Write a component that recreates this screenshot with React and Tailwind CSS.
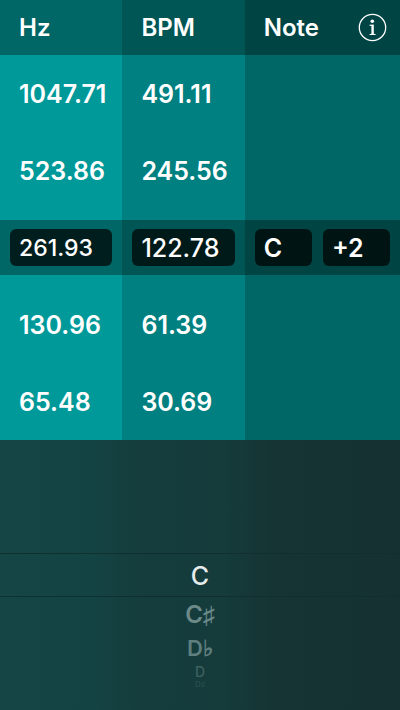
import { useState } from "react";

const upper = [
  { hz: "1047.71", bpm: "491.11", cell: "h-[78px]" },
  { hz: "523.86", bpm: "245.56", cell: "h-[87px] pb-[12px]" },
];
const lower = [
  { hz: "130.96", bpm: "61.39", cell: "h-[88px] pt-[11px]" },
  { hz: "65.48", bpm: "30.69", cell: "h-[77px]" },
];

function InfoIcon() {
  return (
    <svg viewBox="0 0 30 30" className="block size-[30px]" fill="none" aria-hidden="true">
      <circle cx="14.5" cy="14.5" r="13.2" stroke="#fff" strokeWidth="1.3" />
      <circle cx="14.3" cy="8.2" r="1.8" fill="#fff" />
      <path d="M11.5 11.8L15.8 11.4V20.8L17.7 21.2V22.1H11.5V21.2L13.4 20.8V12.9L11.5 12.7Z" fill="#fff" />
    </svg>
  );
}

function Row({ hz, bpm, cell }) {
  return (
    <tr className="text-[25px] leading-[30px]">
      <td className={`bg-[#009999] pl-[19px] ${cell}`}>{hz}</td>
      <td className={`bg-[#008080] pl-[19px] ${cell}`}>{bpm}</td>
      <td className={`bg-[#006666] ${cell}`} />
    </tr>
  );
}

const field =
  "block h-[37px] w-full min-w-0 rounded-[6px] bg-black/70 pl-[9px] text-left text-white outline-none";

export default function App() {
  const [hz, setHz] = useState("261.93");
  const [bpm, setBpm] = useState("122.78");
  const [cents, setCents] = useState("+2");

  return (
    <main className="flex min-h-screen flex-col bg-[#153c3c] font-['Inter','Noto_Sans',sans-serif] text-[24px] leading-[30px] font-semibold text-white">
      <table className="w-full table-fixed border-collapse text-left">
        <colgroup>
          <col className="w-[30.6%]" />
          <col className="w-[30.6%]" />
          <col />
        </colgroup>
        <thead>
          <tr className="h-[55px]">
            <th scope="col" className="bg-[#006666] pl-[19px] font-semibold">Hz</th>
            <th scope="col" className="bg-[#005555] pl-[19px] font-semibold">BPM</th>
            <th scope="col" className="bg-[#004444] pr-[12px] pl-[19px] font-semibold">
              <div className="flex items-center justify-between">
                Note
                <button type="button" aria-label="Information">
                  <InfoIcon />
                </button>
              </div>
            </th>
          </tr>
        </thead>
        <tbody>
          {upper.map((r) => (
            <Row key={r.hz} {...r} />
          ))}
          <tr className="h-[55px]">
            <td className="bg-[#006666] px-[10px]">
              <input aria-label="Frequency in Hz" className={`${field} text-[23px] font-medium`} value={hz} onChange={(e) => setHz(e.target.value)} />
            </td>
            <td className="bg-[#005555] px-[10px]">
              <input aria-label="Beats per minute" className={`${field} text-[25px] font-medium`} value={bpm} onChange={(e) => setBpm(e.target.value)} />
            </td>
            <td className="bg-[#004444] px-[10px]">
              <div className="grid grid-cols-[57fr_67fr] gap-[11px]">
                <button type="button" aria-haspopup="listbox" className={`${field} text-[25px] font-semibold`}>C</button>
                <input aria-label="Cents" className={`${field} text-[25px] font-semibold`} value={cents} onChange={(e) => setCents(e.target.value)} />
              </div>
            </td>
          </tr>
          {lower.map((r) => (
            <Row key={r.hz} {...r} />
          ))}
        </tbody>
      </table>

      <div
        role="listbox"
        aria-label="Note"
        className="grid flex-1 grid-rows-[minmax(113px,1fr)_44px_minmax(113px,1fr)] bg-[linear-gradient(90deg,#154545_0%,#144343_24%,#153d3d_34%,#153b3b_56%,#163434_68%,#153131_100%)] font-medium"
      >
        <div />
        <button type="button" role="option" aria-selected="true" className="w-full border-y border-[#122f30] pt-[2px] text-[25px] text-[#e6ebeb]">
          C
        </button>
        <div className="flex flex-col items-center pt-[3px]">
          <button type="button" role="option" aria-selected="false" className="h-[30px] text-[24px] leading-[30px] font-semibold text-[#6d8a8a]">C♯</button>
          <button type="button" role="option" aria-selected="false" className="mt-[3px] h-[30px] text-[22px] leading-[30px] font-semibold text-[#5f7e7e]">D♭</button>
          <button type="button" role="option" aria-selected="false" className="mt-[2px] h-[14px] text-[14px] leading-[14px] text-[#3c6060]">D</button>
          <button type="button" role="option" aria-selected="false" className="mt-[1px] h-[8px] text-[8px] leading-[8px] text-[#2a5050]">D♯</button>
        </div>
      </div>
    </main>
  );
}
